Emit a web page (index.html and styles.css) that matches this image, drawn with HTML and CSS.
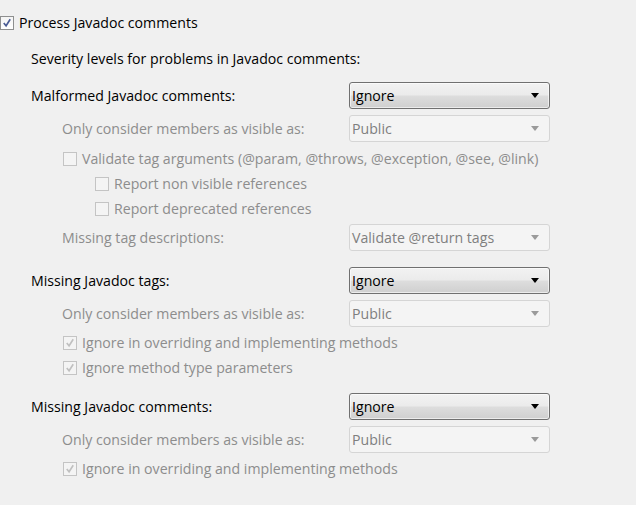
FILE: index.html
```html
<!DOCTYPE html>
<html>
<head>
<meta charset="utf-8">
<link rel="stylesheet" href="styles.css">
</head>
<body>
<div class="page">
  <div class="row r-top">
    <span class="cb checked"><svg viewBox="0 0 13 13"><path d="M3 6.5 L5.5 9.5 L10 2.5" /></svg></span>
    <span class="txt">Process Javadoc comments</span>
  </div>
  <div class="row r-sev ind1"><span class="txt">Severity levels for problems in Javadoc comments:</span></div>

  <div class="grid g1">
    <div class="lbl ind1">Malformed Javadoc comments:</div>
    <div class="combo"><span>Ignore</span><i class="arrow"></i></div>
    <div class="lbl ind2 dis">Only consider members as visible as:</div>
    <div class="combo disabled"><span>Public</span><i class="arrow"></i></div>
  </div>
  <div class="row crow ind2 r-val">
    <span class="cb dcb"></span><span class="txt dis">Validate tag arguments (@param, @throws, @exception, @see, @link)</span>
  </div>
  <div class="row crow ind3">
    <span class="cb dcb"></span><span class="txt dis">Report non visible references</span>
  </div>
  <div class="row crow ind3">
    <span class="cb dcb"></span><span class="txt dis">Report deprecated references</span>
  </div>
  <div class="grid g2">
    <div class="lbl ind2 dis">Missing tag descriptions:</div>
    <div class="combo disabled"><span>Validate @return tags</span><i class="arrow"></i></div>
  </div>

  <div class="grid g3">
    <div class="lbl ind1">Missing Javadoc tags:</div>
    <div class="combo"><span>Ignore</span><i class="arrow"></i></div>
    <div class="lbl ind2 dis">Only consider members as visible as:</div>
    <div class="combo disabled"><span>Public</span><i class="arrow"></i></div>
  </div>
  <div class="row crow ind2 r-chk">
    <span class="cb dcb checked"><svg viewBox="0 0 13 13"><path d="M3 6.5 L5.5 9.5 L10 2.5" /></svg></span><span class="txt dis">Ignore in overriding and implementing methods</span>
  </div>
  <div class="row crow ind2">
    <span class="cb dcb checked"><svg viewBox="0 0 13 13"><path d="M3 6.5 L5.5 9.5 L10 2.5" /></svg></span><span class="txt dis">Ignore method type parameters</span>
  </div>

  <div class="grid g4">
    <div class="lbl ind1">Missing Javadoc comments:</div>
    <div class="combo"><span>Ignore</span><i class="arrow"></i></div>
    <div class="lbl ind2 dis">Only consider members as visible as:</div>
    <div class="combo disabled"><span>Public</span><i class="arrow"></i></div>
  </div>
  <div class="row crow ind2 r-chk">
    <span class="cb dcb checked"><svg viewBox="0 0 13 13"><path d="M3 6.5 L5.5 9.5 L10 2.5" /></svg></span><span class="txt dis">Ignore in overriding and implementing methods</span>
  </div>
</div>
</body>
</html>
```
FILE: styles.css
```css
html, body {
  margin: 0;
  padding: 0;
  background: #f0f0f0;
}
body {
  width: 636px;
  height: 505px;
  overflow: hidden;
  font-family: "Open Sans", "Noto Sans", sans-serif;
  font-size: 14.15px;
  color: #000;
}
.page {
  padding-top: 9px;
}
.row {
  display: flex;
  align-items: center;
  height: 26px;
  white-space: nowrap;
}
.r-top { height: 27px; }
.r-sev { margin-top: 9px; }
.crow { height: 25px; }
.r-val { margin-top: 4px; }
.r-chk { margin-top: 3px; }
.ind1 { padding-left: 31px; }
.ind2 { padding-left: 62px; }
.ind3 { padding-left: 95px; }
.row.ind2 { padding-left: 63px; }

.txt { display: block; }
.dis { color: #8d8d8d; }

.cb {
  box-sizing: border-box;
  width: 14px;
  height: 14px;
  border: 1px solid #8e8f8f;
  background: linear-gradient(#f4f4f4, #ffffff);
  margin-right: 5px;
  flex: none;
  display: flex;
}
.cb svg { width: 12px; height: 12px; }
.cb path {
  fill: none;
  stroke: #4a5c95;
  stroke-width: 1.8;
}
.dcb {
  border-color: #c4c4c4;
  background: #f4f4f4;
}
.dcb path { stroke: #c0c0c0; }

.grid {
  display: grid;
  grid-template-columns: 349px 201px;
  grid-auto-rows: 27px;
  row-gap: 6px;
  align-items: center;
  white-space: nowrap;
}
.g1 { margin-top: 11px; }
.g2 { margin-top: 3px; }
.g3 { margin-top: 16px; }
.g4 { margin-top: 13px; }

.combo {
  box-sizing: border-box;
  height: 27px;
  border: 1px solid #707070;
  border-radius: 3px;
  background: linear-gradient(#f2f2f2 0%, #ebebeb 48%, #dddddd 52%, #cfcfcf 100%);
  display: flex;
  align-items: center;
  justify-content: space-between;
  padding: 0 10px 0 2px;
  box-shadow: inset 0 0 0 1px rgba(255,255,255,0.6);
}
.combo.disabled {
  border-color: #d5d5d5;
  background: #f4f4f4;
  color: #7f7f7f;
  box-shadow: none;
}
.arrow {
  width: 0;
  height: 0;
  border-left: 4px solid transparent;
  border-right: 4px solid transparent;
  border-top: 5px solid #000;
}
.combo.disabled .arrow { border-top-color: #9a9a9a; }
```
